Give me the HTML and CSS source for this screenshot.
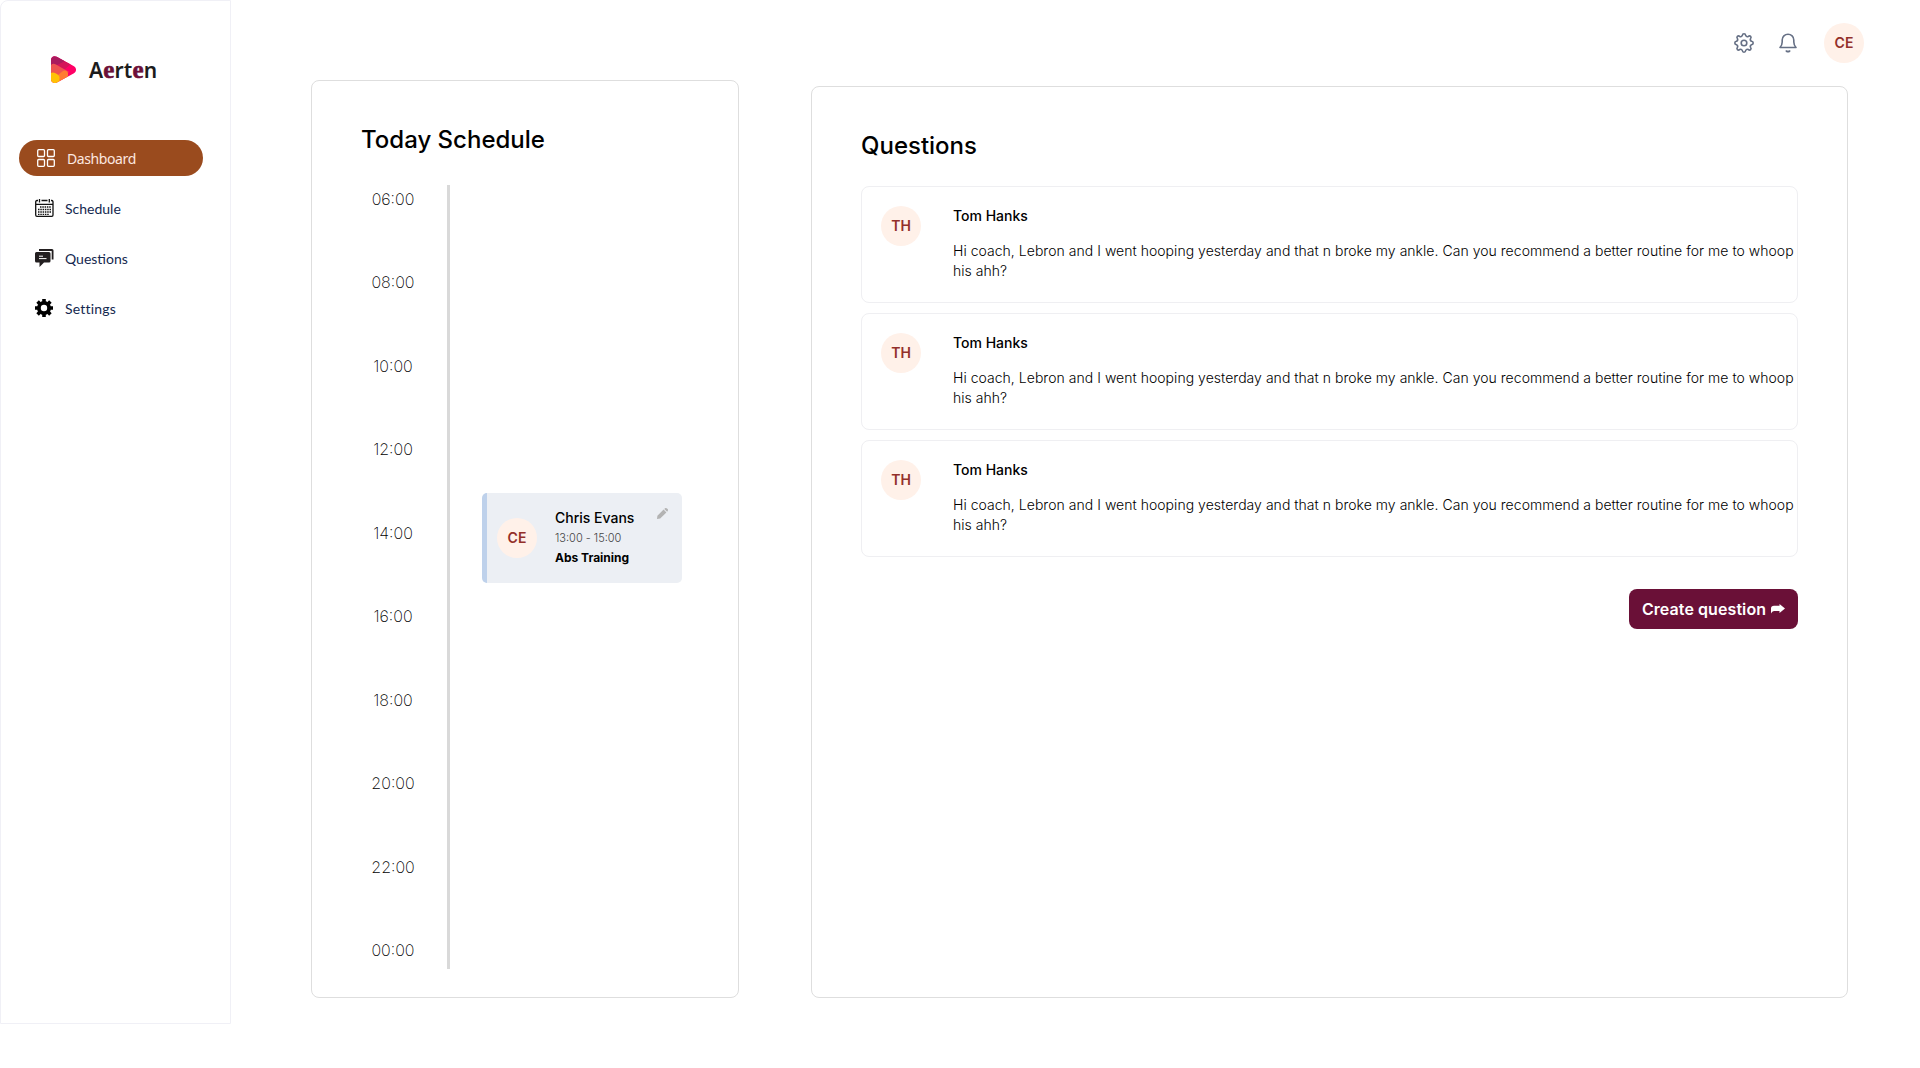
FILE: index.html
```html
<!DOCTYPE html>
<html lang="en">
<head>
<meta charset="utf-8">
<title>Aerten</title>
<link rel="stylesheet" href="styles.css">
</head>
<body>
<aside class="sidebar">
  <div class="brand">
    <svg class="brand-mark" width="26" height="28" viewBox="0 0 26 28">
      <defs><clipPath id="play"><path d="M0 4C0 .8 3 -.8 5.800 .8L23 10.300C25.700 12 25.700 15.500 23 17.200L6 26.500C3 28 0 26.500 0 23.500Z"/></clipPath></defs>
      <g clip-path="url(#play)">
        <rect width="26" height="28" fill="#ff0066"/>
        <path d="M0 9L9 3L20 8L14 13L10 14Z" fill="#d4145a"/>
        <path d="M0 0H6L14 5L0 12Z" fill="#aa1a5e"/>
        <path d="M0 9Q2 7 5 8.500L18 16L8 21L0 20Z" fill="#ef5350"/>
        <path d="M7 19L12 15Q15 13.500 17 17V21L8 26Z" fill="#ff7b33"/>
        <path d="M0 17Q2 16 5 17.500Q9 19.500 8.500 22L8 28H0Z" fill="#ffc107"/>
      </g>
    </svg>
    <span class="brand-name">A<b>e</b>rt<b>e</b>n</span>
  </div>
  <nav class="nav">
    <a class="nav-item active">
      <svg width="18" height="18" viewBox="0 0 18 18" fill="none" stroke="#fff" stroke-width="1.300"><rect x=".7" y=".7" width="6.800" height="6.800" rx="1"/><rect x="10.500" y=".7" width="6.800" height="6.800" rx="1"/><rect x=".7" y="10.500" width="6.800" height="6.800" rx="1"/><rect x="10.500" y="10.500" width="6.800" height="6.800" rx="1"/></svg>
      <span>Dashboard</span>
    </a>
    <a class="nav-item">
      <svg width="19" height="18" viewBox="0 0 19 18" fill="none" stroke="#111"><path d="M3 1.500H2Q.7 1.500 .7 3V16Q.7 17.300 2 17.300H16.800Q18 17.300 18 16V3Q18 1.500 16.800 1.500H16M6.500 1.500H12.500M.7 5.300H18" stroke-width="1.300"/><path d="M4.500 0V3.500M14.300 0V3.500" stroke-width="1.300"/><path d="M5 8H16.500M3 10.500H16.500M3 13H16.500M3 15.300H14" stroke-width="1.300" stroke-dasharray="1.500 .8"/></svg>
      <span>Schedule</span>
    </a>
    <a class="nav-item">
      <svg width="19" height="18" viewBox="0 0 19 18"><path d="M4 0H17Q18.500 0 18.500 1.500V10.500H16.700V2H4Z" fill="#231f20"/><path d="M1.500 3H14Q15.500 3 15.500 4.500V12Q15.500 13.500 14 13.500H9L4.500 18V13.500H1.500Q0 13.500 0 12V4.500Q0 3 1.500 3Z" fill="#231f20"/><path d="M4 7.200H8M4 9.600H11.500" stroke="#fff"/></svg>
      <span>Questions</span>
    </a>
    <a class="nav-item">
      <svg width="18" height="18" viewBox="0 0 18 18"><circle cx="9" cy="9" r="5.100" fill="none" stroke="#000" stroke-width="3.800"/><g stroke="#000" stroke-width="3.600"><path d="M9 0V3M9 15V18M0 9H3M15 9H18M2.600 2.600L4.700 4.700M13.300 13.300L15.400 15.400M2.600 15.400L4.700 13.300M13.300 4.700L15.400 2.600"/></g></svg>
      <span class="nav-settings">Settings</span>
    </a>
  </nav>
</aside>
<main class="main">
  <header class="topbar">
    <svg width="20" height="20" viewBox="0 0 20 20" fill="none" stroke="#667085" stroke-width="1.600" stroke-linejoin="round"><circle cx="10" cy="10" r="2.800"/><path d="M8.300 2.500Q8.500 .8 10 .8T11.700 2.500Q12.500 4.200 14.200 3.500Q15.600 2.400 16.600 3.400T16.500 5.800Q15.800 7.500 17.500 8.300Q19.200 8.500 19.200 10T17.500 11.700Q15.800 12.500 16.500 14.200Q17.600 15.600 16.600 16.600T14.200 16.500Q12.500 15.800 11.700 17.500Q11.500 19.200 10 19.200T8.300 17.500Q7.500 15.800 5.800 16.500Q4.400 17.600 3.400 16.600T3.500 14.200Q4.200 12.500 2.500 11.700Q.8 11.500 .8 10T2.500 8.300Q4.200 7.500 3.500 5.800Q2.400 4.400 3.400 3.400T5.800 3.500Q7.500 4.200 8.300 2.500Z"/></svg>
    <svg class="bell" width="18" height="20" viewBox="0 0 18 20" fill="none" stroke="#667085" stroke-width="1.600" stroke-linecap="round" stroke-linejoin="round"><path d="M1 14.500Q3.200 12 3.200 9V7A5.800 5.800 0 0 1 14.800 7V9Q14.800 12 17 14.500ZM7.300 18Q9 19.300 10.700 18"/></svg>
    <span class="avatar">CE</span>
  </header>
  <div class="panels">
    <section class="panel schedule">
      <h2>Today Schedule</h2>
      <div class="timeline">
        <ol class="hours"><li>06:00</li><li>08:00</li><li>10:00</li><li>12:00</li><li>14:00</li><li>16:00</li><li>18:00</li><li>20:00</li><li>22:00</li><li>00:00</li></ol>
        <div class="axis"></div>
        <article class="event">
          <span class="avatar">CE</span>
          <div class="event-text">
            <span class="event-name">Chris Evans</span>
            <span class="event-time">13:00 - 15:00</span>
            <span class="event-kind">Abs Training</span>
          </div>
          <svg class="edit" width="11" height="11" viewBox="0 0 11 11" fill="#b3b3b3"><path d="M0 11L.4 7.800L6.600 1.600L9.400 4.400L3.200 10.600ZM7.300 .9L8 .3Q9 -.4 10 .5L10.600 1.100Q11.400 2 10.700 3L10.100 3.700Z"/></svg>
        </article>
      </div>
    </section>
    <section class="panel questions">
      <h2>Questions</h2>
      <div class="question-list">
        <article class="question"><span class="avatar">TH</span><div><h3>Tom Hanks</h3><p>Hi coach, Lebron and I went hooping yesterday and that n broke my ankle. Can you recommend a better routine for me to whoop his ahh?</p></div></article>
        <article class="question"><span class="avatar">TH</span><div><h3>Tom Hanks</h3><p>Hi coach, Lebron and I went hooping yesterday and that n broke my ankle. Can you recommend a better routine for me to whoop his ahh?</p></div></article>
        <article class="question"><span class="avatar">TH</span><div><h3>Tom Hanks</h3><p>Hi coach, Lebron and I went hooping yesterday and that n broke my ankle. Can you recommend a better routine for me to whoop his ahh?</p></div></article>
      </div>
      <button class="create">Create question
        <svg width="14" height="10" viewBox="0 0 14 10" fill="#fff"><path d="M0 9.500V4.500Q0 1.800 3 1.800H8.500V0L14 4.500L8.500 9V7H3Q1 7 0 9.500Z"/></svg>
      </button>
    </section>
  </div>
</main>
</body>
</html>
```
FILE: styles.css
```css
* { box-sizing: border-box; }
body { margin: 0; display: flex; align-items: flex-start; height: 1068px; overflow: hidden; background: #fff; color: #000; font-family: Inter, "Liberation Sans", sans-serif; }
h2, h3, p, ol { margin: 0; padding: 0; }
.sidebar { width: 231px; height: 1024px; border: 1px solid #f0f0f6; border-radius: 8px 0 0 0; padding: 54px 27px 0 18px; }
.brand { display: flex; align-items: center; gap: 12px; height: 30px; margin-left: 32px; }
.brand-name { font: 600 21px/30px "Noto Sans", sans-serif; color: #1c1c1c; letter-spacing: .15px; white-space: nowrap; }
.brand-name b { font: 700 25px/30px "Liberation Serif", serif; color: #6d1039; -webkit-text-stroke: .6px #6d1039; }
.nav { display: flex; flex-direction: column; gap: 14px; margin-top: 55px; }
.nav-item { display: flex; align-items: center; gap: 11px; height: 36px; padding-left: 16px; border-radius: 18px; font: 14px/20px Lato, sans-serif; color: #14284f; }
.nav-item svg { margin-top: -1px; }
.nav-item span { margin-top: 1px; }
.nav-item .nav-settings { margin-left: 1px; letter-spacing: .2px; }
.nav-item.active { gap: 12px; padding-left: 18px; background: #9a4b1e; color: #fde8e0; font: 14px/20px "Noto Sans", sans-serif; letter-spacing: -.4px; }
.main { flex: 1; padding: 23px 56px 0 80px; }
.topbar { display: flex; align-items: center; justify-content: flex-end; gap: 26px; height: 40px; }
.bell { margin: 0 1px 0 -1px; }
.avatar { display: flex; align-items: center; justify-content: center; flex: none; width: 40px; height: 40px; border-radius: 50%; background: #fff1e9; color: #93302a; font-size: 14px; font-weight: 600; padding-bottom: 1px; }
.panels { display: flex; justify-content: space-between; align-items: flex-end; height: 935px; padding-right: 16px; }
.panel { border: 1px solid #dedede; border-radius: 8px; }
.panel h2 { font-size: 24px; line-height: 30px; font-weight: 500; }
.schedule { width: 428px; height: 918px; padding: 44px 49px 0; }
.timeline { display: flex; margin-top: 30px; height: 784px; }
.hours { width: 86px; padding: 2px 0 7px 10px; display: flex; flex-direction: column; justify-content: space-between; list-style: none; font-size: 16px; line-height: 24px; font-weight: 200; }
.hours li { width: 44px; text-align: center; }
.axis { width: 3px; background: #d9d9d9; }
.event { display: flex; align-items: center; flex: none; width: 200px; height: 90px; margin: 308px 0 0 32px; border-left: 5px solid #bed1eb; border-radius: 5px; background: #eceff4; padding-left: 10px; }
.event-text { display: flex; flex-direction: column; width: 102px; margin-left: 18px; line-height: 20px; }
.event-name { font-size: 14px; font-weight: 500; }
.event-time { font-size: 11px; font-weight: 300; color: #444; }
.event-kind { font-size: 12px; font-weight: 700; }
.edit { align-self: flex-start; margin-top: 15px; }
.questions { width: 1037px; height: 912px; padding: 44px 49px 0; display: flex; flex-direction: column; }
.question-list { display: flex; flex-direction: column; gap: 10px; margin-top: 25px; }
.question { display: flex; gap: 32px; height: 117px; border: 1px solid #efeff2; border-radius: 8px; padding: 19px 0 0 19px; }
.question h3 { font-size: 14px; line-height: 20px; font-weight: 500; }
.question p { margin-top: 15px; font-size: 14px; line-height: 20px; font-weight: 300; letter-spacing: .034px; }
.create { align-self: flex-end; display: flex; align-items: center; justify-content: center; gap: 5px; width: 169px; height: 40px; margin-top: 32px; padding: 0; border: 0; border-radius: 8px; background: #6a1037; color: #fff; font: 600 16px/20px Inter, sans-serif; letter-spacing: .08px; white-space: nowrap; }
```
